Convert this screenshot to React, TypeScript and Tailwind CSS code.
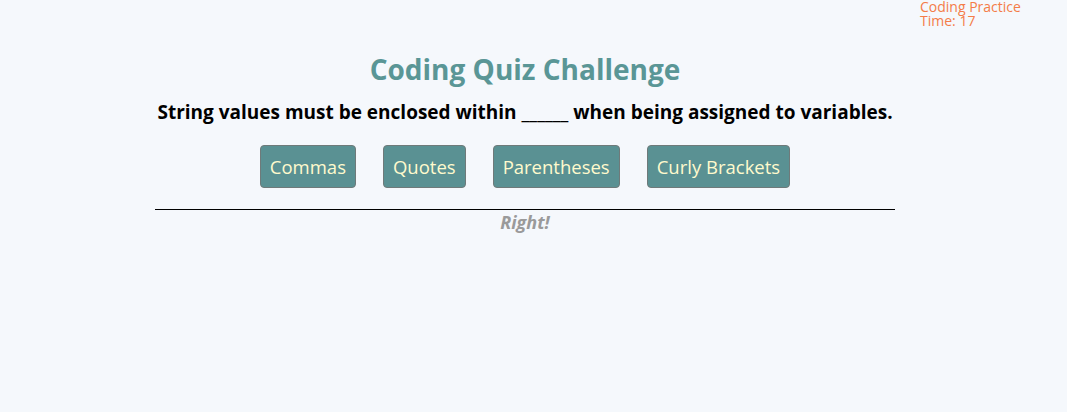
import React from "react";

function App() {
  const choices = ["Commas", "Quotes", "Parentheses", "Curly Brackets"];

  return (
    <div className="min-h-[412px] w-full bg-[#f5f8fc] font-['Open_Sans',sans-serif]">
      {/* Top-right info */}
      <div className="flex justify-end pr-[38px]">
        <div className="w-[109px] text-[14px] leading-[14px] text-[#f47c48] whitespace-nowrap">
          <p>Coding Practice</p>
          <p>Time: 17</p>
        </div>
      </div>

      <div className="flex justify-center pr-[17px]">
        <div className="w-[740px] flex flex-col items-center">
          <h1 className="mt-[22px] text-[28px] leading-[38px] font-bold text-[#5a9696]">
            Coding Quiz Challenge
          </h1>
          <p className="mt-[11px] text-[19px] leading-[26px] font-bold text-black whitespace-nowrap">
            String values must be enclosed within ______ when being assigned to variables.
          </p>
          <div className="mt-[20px] flex gap-[27px]">
            {choices.map((c) => (
              <button
                key={c}
                className="h-[43px] px-[9px] rounded-[4px] border border-[#6f7a7a] bg-[#5a9193] text-[#fffacd] text-[18.5px]"
              >
                {c}
              </button>
            ))}
          </div>
          <div className="mt-[21px] w-full border-t border-black"></div>
          <p className="text-[18px] leading-[24px] font-bold italic text-[#9a9a9a]">
            Right!
          </p>
        </div>
      </div>
    </div>
  );
}

export default App;
